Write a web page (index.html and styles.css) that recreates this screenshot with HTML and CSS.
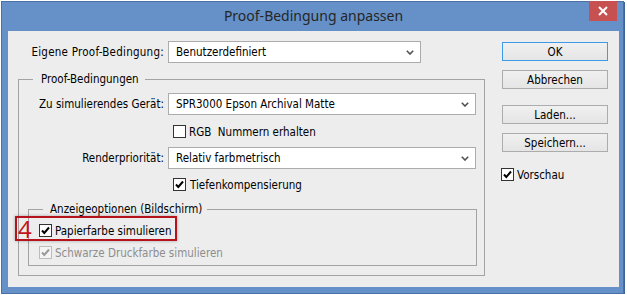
FILE: index.html
```html
<!DOCTYPE html>
<html lang="de">
<head>
<meta charset="utf-8">
<title>Proof-Bedingung anpassen</title>
<link rel="stylesheet" href="styles.css">
</head>
<body>
<div class="window">
  <div class="titlebar">
    <div class="title">Proof-Bedingung anpassen</div>
    <div class="close">
      <svg width="10" height="10" viewBox="0 0 10 10"><path d="M1 1 L9 9 M9 1 L1 9" stroke="#fff" stroke-width="2" fill="none"/></svg>
    </div>
  </div>
  <div class="body">
    <div class="left">
      <div class="row">
        <span class="label label-outer">Eigene Proof-Bedingung:</span>
        <div class="select select-a"><span>Benutzerdefiniert</span><svg class="chev" width="8" height="5" viewBox="0 0 8 5"><path d="M0.8 0.8 L4 4 L7.2 0.8" stroke="#505050" stroke-width="1.6" fill="none"/></svg></div>
      </div>
      <div class="group">
        <div class="group-title">Proof-Bedingungen</div>
        <div class="row row-dev">
          <span class="label">Zu simulierendes Gerät:</span>
          <div class="select select-b"><span>SPR3000 Epson Archival Matte</span><svg class="chev" width="8" height="5" viewBox="0 0 8 5"><path d="M0.8 0.8 L4 4 L7.2 0.8" stroke="#505050" stroke-width="1.6" fill="none"/></svg></div>
        </div>
        <label class="check check-indent check-rgb"><span class="box"></span><span>RGB&nbsp; Nummern erhalten</span></label>
        <div class="row row-render">
          <span class="label">Renderpriorität:</span>
          <div class="select select-b"><span>Relativ farbmetrisch</span><svg class="chev" width="8" height="5" viewBox="0 0 8 5"><path d="M0.8 0.8 L4 4 L7.2 0.8" stroke="#505050" stroke-width="1.6" fill="none"/></svg></div>
        </div>
        <label class="check check-indent check-tiefen"><span class="box"><svg width="11" height="11" viewBox="0 0 11 11"><path d="M2 5.5 L4.3 8 L9 2.5" stroke="#000" stroke-width="2" fill="none"/></svg></span><span>Tiefenkompensierung</span></label>
        <div class="group inner">
          <div class="group-title inner-title">Anzeigeoptionen (Bildschirm)</div>
          <label class="check check-papier"><span class="box"><svg width="11" height="11" viewBox="0 0 11 11"><path d="M2 5.5 L4.3 8 L9 2.5" stroke="#000" stroke-width="2" fill="none"/></svg></span><span>Papierfarbe simulieren</span></label>
          <label class="check check-schwarz disabled"><span class="box"><svg width="11" height="11" viewBox="0 0 11 11"><path d="M2 5.5 L4.3 8 L9 2.5" stroke="#9a9a9a" stroke-width="2" fill="none"/></svg></span><span>Schwarze Druckfarbe simulieren</span></label>
        </div>
      </div>
    </div>
    <div class="right">
      <div class="btn btn-ok">OK</div>
      <div class="btn btn-gap">Abbrechen</div>
      <div class="btn btn-sep">Laden...</div>
      <div class="btn btn-gap">Speichern...</div>
      <label class="check check-vorschau"><span class="box"><svg width="11" height="11" viewBox="0 0 11 11"><path d="M2 5.5 L4.3 8 L9 2.5" stroke="#000" stroke-width="2" fill="none"/></svg></span><span>Vorschau</span></label>
    </div>
    <div class="mark"></div>
    <div class="mark-num">4</div>
  </div>
</div>
</body>
</html>
```
FILE: styles.css
```css
html, body {
  margin: 0;
  padding: 0;
  background: #ffffff;
}

body {
  font-family: "DejaVu Sans Condensed", "DejaVu Sans", sans-serif;
  font-size: 11.5px;
  color: #000;
}

.window {
  box-sizing: border-box;
  margin: 1px 0 0 1px;
  width: 623px;
  height: 293px;
  background: #6591c8;
  border: 1px solid #4a71a6;
  box-shadow: 1px 1px 0 #3f6394;
  padding: 0 4px 6px 6px;
}

.titlebar {
  height: 29px;
  display: grid;
  grid-template-columns: 1fr auto 1fr;
  align-items: start;
}

.title {
  grid-column: 2;
  font-family: "Noto Sans", "Open Sans", sans-serif;
  font-size: 14px;
  line-height: 27px;
  color: #262626;
}

.close {
  grid-column: 3;
  justify-self: end;
  margin: -1px 2px 0 0;
  width: 28px;
  height: 20px;
  background: #c75050;
  display: flex;
  align-items: center;
  justify-content: center;
}

.body {
  position: relative;
  height: 256px;
  background: #ededed;
  display: flex;
}

.left {
  box-sizing: border-box;
  width: 477px;
  padding: 10px 0 0 10px;
}

.row {
  display: flex;
  align-items: center;
  height: 22px;
}

.label {
  width: 145px;
  margin-right: 4px;
  text-align: right;
  white-space: nowrap;
}

.label-outer {
  width: 146px;
  letter-spacing: 0.25px;
}

.select {
  box-sizing: border-box;
  height: 22px;
  background: #fff;
  border: 1px solid #acacac;
  display: flex;
  align-items: center;
  justify-content: space-between;
  padding: 0 6px 0 7px;
}

.select-a {
  width: 253px;
}

.select-b {
  width: 308px;
}

.group {
  box-sizing: border-box;
  margin-top: 16px;
  width: 467px;
  height: 197px;
  border: 1px solid #a3a3a3;
}

.group-title {
  width: max-content;
  margin: -8px 0 0 14px;
  padding: 0 6px 0 8px;
  line-height: 14px;
  background: #ededed;
}

.row-dev {
  margin-top: 7px;
}

.row-render {
  margin-top: 9px;
}

.check {
  display: flex;
  align-items: center;
  gap: 3px;
  height: 13px;
  line-height: 14px;
  white-space: nowrap;
}

.box {
  box-sizing: border-box;
  width: 13px;
  height: 13px;
  background: #fff;
  border: 1px solid #333;
  display: flex;
  align-items: center;
  justify-content: center;
  flex: none;
}

.check-indent {
  margin-left: 154px;
}

.check-rgb {
  margin-top: 10px;
}

.check-tiefen {
  margin-top: 9px;
  gap: 4px;
}

.inner {
  margin: 18px 0 0 9px;
  width: 449px;
  height: 57px;
}

.inner-title {
  padding: 0 5px 0 7px;
}

.check-papier {
  margin: 8px 0 0 10px;
}

.check-schwarz {
  margin: 9px 0 0 10px;
}

.disabled {
  color: #8d8d8d;
}

.disabled .box {
  border-color: #bcbcbc;
  background: #f4f4f4;
}

.right {
  margin-left: 17px;
  padding-top: 11px;
  width: 106px;
}

.btn {
  box-sizing: border-box;
  height: 19px;
  border: 1px solid #acacac;
  background: linear-gradient(#f0f0f0, #e5e5e5);
  display: flex;
  align-items: center;
  justify-content: center;
  line-height: 14px;
}

.btn-ok {
  border-color: #3c9ae8;
}

.btn-gap {
  margin-top: 9px;
}

.btn-sep {
  margin-top: 16px;
}

.check-vorschau {
  margin: 16px 0 0 -1px;
}

.mark {
  position: absolute;
  left: 7px;
  top: 185px;
  width: 162px;
  height: 25px;
  box-sizing: border-box;
  border: 2px solid #b5141c;
  box-shadow: 0 0 3px rgba(0, 0, 0, 0.3);
}

.mark-num {
  position: absolute;
  left: 10px;
  top: 184px;
  font-family: "Open Sans", "Noto Sans", sans-serif;
  font-size: 24px;
  line-height: 28px;
  color: #c0151c;
}
```
